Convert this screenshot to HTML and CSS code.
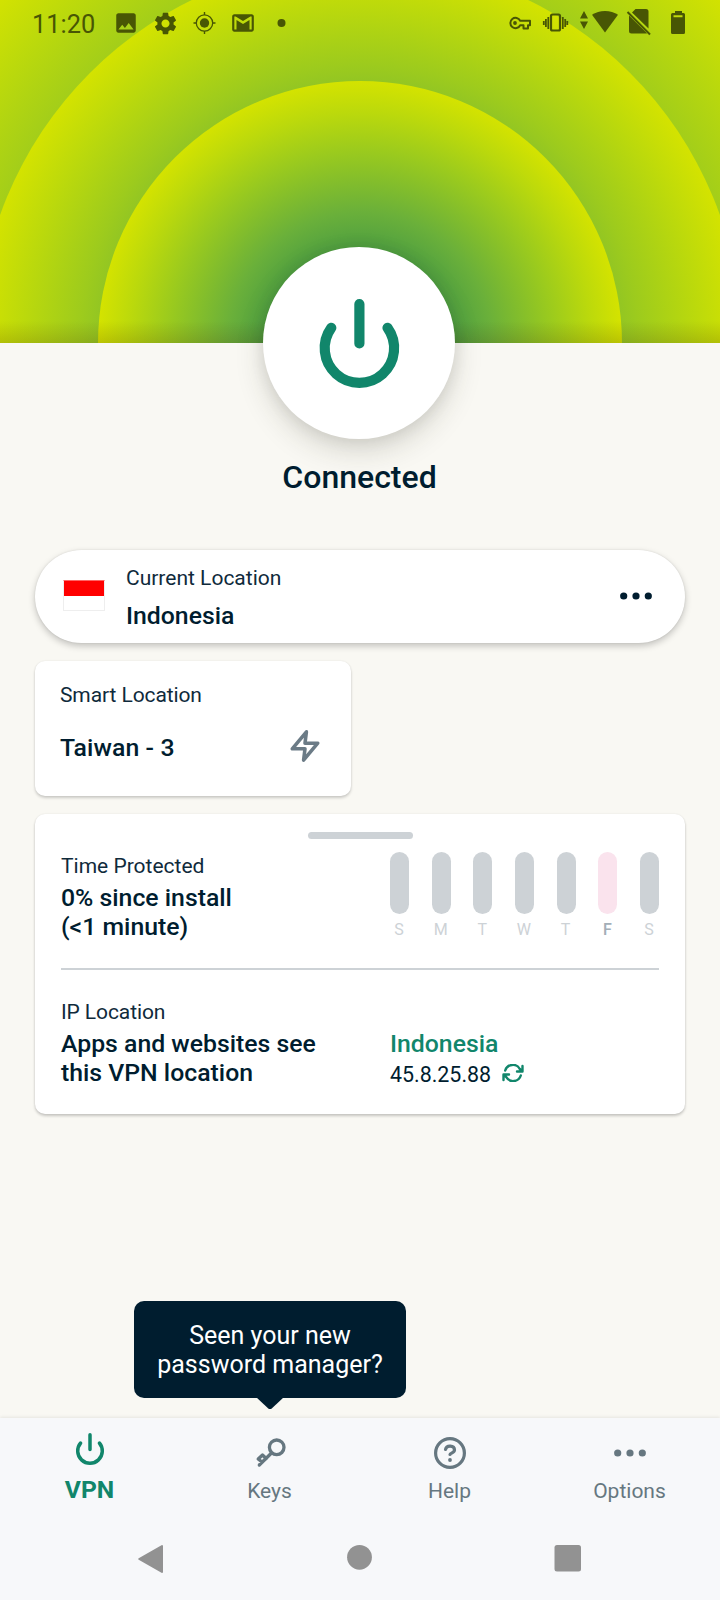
FILE: index.html
```html
<!DOCTYPE html>
<html lang="en">
<head>
<meta charset="utf-8">
<title>VPN</title>
<link rel="stylesheet" href="styles.css">
</head>
<body>
<div class="screen">
  <header class="hero">
    <svg class="rings" viewBox="0 0 720 343" width="720" height="343" aria-hidden="true">
      <defs>
        <radialGradient id="g1" gradientUnits="userSpaceOnUse" cx="360" cy="343" r="262">
          <stop offset="0.36" stop-color="#4f9f41"/><stop offset="0.5" stop-color="#6ab03a"/><stop offset="0.73" stop-color="#9aca1e"/><stop offset="0.88" stop-color="#bbd90c"/><stop offset="1" stop-color="#d4e300"/>
        </radialGradient>
        <radialGradient id="g2" gradientUnits="userSpaceOnUse" cx="360" cy="343" r="382">
          <stop offset="0.5" stop-color="#6ab03a"/><stop offset="0.73" stop-color="#9dcb1d"/><stop offset="0.88" stop-color="#bbd90c"/><stop offset="1" stop-color="#d4e300"/>
        </radialGradient>
        <radialGradient id="g3" gradientUnits="userSpaceOnUse" cx="360" cy="343" r="502">
          <stop offset="0.5" stop-color="#6ab03a"/><stop offset="0.73" stop-color="#9dcb1d"/><stop offset="0.88" stop-color="#bbd90c"/><stop offset="1" stop-color="#d4e300"/>
        </radialGradient>
        <linearGradient id="shade" x1="0" y1="0" x2="0" y2="1">
          <stop offset="0" stop-color="#402000" stop-opacity="0"/><stop offset="1" stop-color="#402000" stop-opacity="0.16"/>
        </linearGradient>
      </defs>
      <rect width="720" height="343" fill="url(#g3)"/>
      <circle cx="360" cy="343" r="382" fill="url(#g2)"/>
      <circle cx="360" cy="343" r="262" fill="url(#g1)"/>
      <rect y="321" width="720" height="22" fill="url(#shade)"/>
    </svg>
    <div class="status">
      <span class="clock">11:20</span>
      <div class="status-left">
        <svg width="26" height="26" viewBox="0 0 24 24"><path d="M21 19V5c0-1.100-.9-2-2-2H5c-1.100 0-2 .9-2 2v14c0 1.100.9 2 2 2h14c1.100 0 2-.9 2-2zM8.500 13.500l2.500 3.010L14.500 12l4.500 6H5l3.500-4.500z"/></svg>
        <svg width="27" height="27" viewBox="0 0 24 24"><path d="M19.140 12.940c.04-.3.06-.61.06-.94 0-.32-.02-.64-.07-.94l2.030-1.580c.18-.14.23-.41.12-.61l-1.920-3.320c-.12-.22-.37-.29-.59-.22l-2.390.96c-.5-.38-1.030-.7-1.620-.94l-.36-2.540c-.04-.24-.24-.41-.48-.41h-3.840c-.24 0-.43.17-.47.41l-.36 2.540c-.59.24-1.130.57-1.620.94l-2.390-.96c-.22-.08-.47 0-.59.22L2.740 8.870c-.12.21-.08.47.12.61l2.030 1.580c-.05.3-.09.63-.09.94s.02.64.07.94l-2.030 1.580c-.18.14-.23.41-.12.61l1.920 3.320c.12.22.37.29.59.22l2.390-.96c.5.38 1.030.7 1.620.94l.36 2.540c.05.24.24.41.48.41h3.840c.24 0 .44-.17.47-.41l.36-2.540c.59-.24 1.130-.56 1.620-.94l2.390.96c.22.08.47 0 .59-.22l1.920-3.320c.12-.22.07-.47-.12-.61l-2.010-1.580zM12 15.600c-1.980 0-3.600-1.620-3.600-3.600s1.620-3.600 3.600-3.600 3.600 1.620 3.600 3.600-1.620 3.600-3.600 3.600z"/></svg>
        <svg width="25" height="26" viewBox="-12.500 -13 25 26"><circle r="4.700"/><circle r="8.200" fill="none" stroke="#485604" stroke-width="1.300"/><path d="M-.7-11h1.400v3H-.7zM-.7 8h1.400v3H-.7zM-11-.7h3V.7h-3zM8-.7h3V.7H8z"/></svg>
        <svg width="26" height="26" viewBox="0 0 24 24"><path d="M20 4H4c-1.100 0-2 .9-2 2v12c0 1.100.9 2 2 2h16c1.100 0 2-.9 2-2V6c0-1.100-.9-2-2-2zm0 14h-2V9.250L12 13 6 9.250V18H4V6h1.200l6.800 4.250L18.800 6H20v12z"/></svg>
        <svg width="10" height="26" viewBox="0 0 10 26"><circle cx="5.500" cy="13" r="4"/></svg>
      </div>
      <div class="status-right">
        <svg width="180" height="48" viewBox="505 0 180 48">
          <g fill="none" stroke="#485604">
            <path stroke-width="2" stroke-linejoin="round" d="M520.200 20.700H530v4.600h-2v3.200h-4.500v-3.200h-3.300a5.200 5.200 0 1 1 0-4.600z"/>
            <rect x="551" y="14.500" width="9" height="16" rx="1.500" stroke-width="2.200"/>
            <path stroke-width="1.800" d="M548.300 17v12M545.900 19v8M543.800 21v4M562.800 17v12M565.200 19v8M567.300 21v4"/>
          </g>
          <circle cx="515" cy="23" r="1.900"/>
          <path d="M584 11l4 7.500h-8zM584 29l4-7.500h-8z"/>
          <path d="M605 32.500L592 14.800c7-5.200 19-5.200 26 0z"/>
          <path d="M635.500 9H646q2.500 0 2.500 2.500V28.500L632 12.500zM629 15.500l18 17.800q-.5.200-1 .2H631.500q-2.500 0-2.500-2.500z"/>
          <path d="M627.500 12L650 34.500" stroke="#485604" stroke-width="2"/>
          <path fill-rule="evenodd" d="M675 13v-2h7v2h1.500q1.500 0 1.500 1.500V32.500q0 1.500-1.500 1.500h-11q-1.500 0-1.500-1.500V14.500q0-1.500 1.500-1.500zM673.500 15.300v2h9v-2z"/>
        </svg>
      </div>
    </div>
  </header>

  <main class="content">
    <button class="power" aria-label="Disconnect">
      <svg width="192" height="192" viewBox="0 0 192 192" fill="none" stroke="#11866b" stroke-width="10.200" stroke-linecap="round"><path d="M96.400 57v39.500M68.300 80.800a34.700 34.700 0 1 0 56.200 0"/></svg>
    </button>
    <h1 class="state">Connected</h1>

    <section class="pill">
      <span class="flag"></span>
      <div class="pill-text"><p class="label">Current Location</p><p class="value">Indonesia</p></div>
      <svg class="more" width="32" height="8" viewBox="0 0 32 8" fill="#001d2f"><circle cx="3.700" cy="4" r="3.600"/><circle cx="16" cy="4" r="3.600"/><circle cx="28.300" cy="4" r="3.600"/></svg>
    </section>

    <section class="smart">
      <p class="label">Smart Location</p>
      <div class="smart-row">
        <p class="value">Taiwan - 3</p>
        <svg width="34" height="34" viewBox="0 0 24 24" fill="none" stroke="#6b7b86" stroke-width="2.500" stroke-linejoin="round"><path d="M13 2L3 14h9l-1 8 10-12h-9z"/></svg>
      </div>
    </section>

    <section class="stats">
      <div class="handle"></div>
      <div class="row time">
        <div class="col">
          <p class="label">Time Protected</p>
          <p class="value">0% since install<br>(&lt;1 minute)</p>
        </div>
        <div class="days">
          <div class="day"><i></i><span>S</span></div>
          <div class="day"><i></i><span>M</span></div>
          <div class="day"><i></i><span>T</span></div>
          <div class="day"><i></i><span>W</span></div>
          <div class="day"><i></i><span>T</span></div>
          <div class="day today"><i></i><span>F</span></div>
          <div class="day"><i></i><span>S</span></div>
        </div>
      </div>
      <div class="row ip">
        <div class="col">
          <p class="label">IP Location</p>
          <p class="value">Apps and websites see<br>this VPN location</p>
        </div>
        <div class="address">
          <p class="value green">Indonesia</p>
          <p class="ip-line"><span>45.8.25.88</span>
            <svg width="22" height="18" viewBox="0 0 22 18" fill="none" stroke="#11866b" stroke-width="2.400" stroke-linecap="round" stroke-linejoin="round"><path d="M20.500 2v5.500H15M1.500 16v-5.500H7M3.200 6.500a8 8 0 0 1 14.500-1.700l2.500 2.500M18.800 11.500a8 8 0 0 1-14.500 1.700l-2.500-2.500"/></svg>
          </p>
        </div>
      </div>
    </section>
    <div class="tip">Seen your new<br>password manager?
      <svg class="tip-arrow" width="28" height="12" viewBox="0 0 28 12"><path fill="#001d2f" d="M0 0h28L16 11.300q-2 1.700-4 0z"/></svg>
    </div>
  </main>

  <nav class="tabs">
    <a class="tab active">
      <svg width="36" height="36" viewBox="0 0 36 36" fill="none" stroke="#11866b" stroke-width="3.500" stroke-linecap="round"><path d="M18 3.700v14.800M8.600 12a12.300 12.300 0 1 0 18.800 0"/></svg>
      <span>VPN</span>
    </a>
    <a class="tab">
      <svg width="36" height="36" viewBox="0 0 36 36" fill="none" stroke="#667780" stroke-width="3.300" stroke-linecap="round" stroke-linejoin="round"><circle cx="24.700" cy="16.300" r="7.300"/><path d="M19.500 22L7.300 34M6.200 28l4.300-4 3.700 3.500M6.200 28l3.800 3"/></svg>
      <span>Keys</span>
    </a>
    <a class="tab">
      <svg width="36" height="36" viewBox="0 0 36 36" fill="none" stroke="#667780" stroke-width="3.200" stroke-linecap="round"><circle cx="18" cy="22" r="14.400"/><path d="M13.500 18.500c.8-4.600 9-4.500 9 .5 0 3-4.500 3-4.500 4.500"/><circle cx="18" cy="29" r="1.900" fill="#667780" stroke="none"/></svg>
      <span>Help</span>
    </a>
    <a class="tab">
      <svg width="36" height="36" viewBox="0 0 36 36" fill="#667780"><circle cx="5.700" cy="22" r="3.600"/><circle cx="18" cy="22" r="3.600"/><circle cx="30.300" cy="22" r="3.600"/></svg>
      <span>Options</span>
    </a>
  </nav>
  <div class="system">
    <svg width="30" height="30" viewBox="0 0 30 30"><path d="M3.200 15L26 2v26z" fill="#929292" stroke="#929292" stroke-width="2" stroke-linejoin="round"/></svg>
    <svg width="30" height="30" viewBox="0 0 30 30"><circle cx="14.500" cy="13.300" r="12.400" fill="#929292"/></svg>
    <svg width="30" height="30" viewBox="0 0 30 30"><rect x="1.500" y="1" width="26.500" height="26.500" rx="2.500" fill="#929292"/></svg>
  </div>
</div>
</body>
</html>
```

FILE: styles.css
```css
* { box-sizing: border-box; }
body { margin: 0; font-family: Roboto, "Liberation Sans", sans-serif; color: #001d2f; }
p, h1 { margin: 0; }
svg { display: block; flex: none; }

.screen { width: 720px; height: 1600px; display: flex; flex-direction: column; background: #f9f8f3; overflow: hidden; }

.hero { height: 343px; flex: none; display: grid; }
.rings, .status { grid-area: 1 / 1; }
.status { height: 48px; padding: 0 35px 0 32px; display: flex; align-items: flex-start; position: relative; z-index: 1; color: #485604; fill: #485604; }
.clock { width: 80px; font-size: 25.4px; line-height: 49px; }
.status-left { display: flex; gap: 13px; padding: 10px 0 0 1px; }
.status-left svg:last-child { margin-left: 7px; }
.status-right { margin-left: auto; }

.content { flex: 1; min-height: 0; padding: 0 35px; display: flex; flex-direction: column; position: relative; z-index: 1; }
.power { align-self: center; width: 192px; height: 192px; margin: -96px 2px 0 0; padding: 0; border: 0; border-radius: 50%; background: #fff; flex: none; box-shadow: 0 12px 28px rgba(50, 45, 30, .17), 0 1px 16px rgba(0, 0, 0, .09); }
.state { margin-top: 18px; padding-right: 1px; text-align: center; font-size: 32px; line-height: 40px; font-weight: 500; }

.label { font-size: 21px; line-height: 26px; color: #0f2a3b; }
.value { font-size: 24.8px; line-height: 29px; font-weight: 500; }

.pill { height: 93px; flex: none; margin-top: 53px; border-radius: 47px; background: #fff; display: flex; align-items: center; padding: 0 33px 0 28px; box-shadow: 0 3px 7px rgba(0, 0, 0, .22), 0 0 2px rgba(0, 0, 0, .1); }
.flag { width: 42px; height: 31px; margin-top: -2px; border: 1px solid #eee; border-top-color: #f66; background: linear-gradient(#f00 0 15px, #fff 15px); }
.pill-text { margin-left: 21px; padding-top: 1px; display: flex; flex-direction: column; gap: 10px; }
.more { margin: -2px 0 0 auto; }

.smart { width: 316px; height: 135px; flex: none; margin-top: 18px; padding: 21px 29px 0 25px; border-radius: 10px; background: #fff; box-shadow: 0 2px 3px rgba(0, 0, 0, .18), 0 0 2px rgba(0, 0, 0, .08); }
.smart .label, .ip .label { letter-spacing: -.1px; }
.smart-row { margin-top: 21px; display: flex; justify-content: space-between; align-items: center; }
.smart-row .value { padding-top: 2px; letter-spacing: .1px; }

.stats { height: 300px; flex: none; margin-top: 18px; padding: 18px 26px 0; border-radius: 10px; background: #fff; box-shadow: 0 2px 3px rgba(0, 0, 0, .2), 0 0 2px rgba(0, 0, 0, .08); }
.handle { width: 105px; height: 7px; margin-left: 247px; border-radius: 4px; background: #cdd2d6; }
.row { display: flex; }
.col { width: 329px; display: flex; flex-direction: column; gap: 4px; }
.time { height: 131px; padding-top: 13px; border-bottom: 2px solid #cdd2d6; }
.time .col, .ip .col { padding-top: 1px; }
.days { width: 269px; display: flex; justify-content: space-between; }
.day { width: 19px; display: flex; flex-direction: column; align-items: center; gap: 6px; font-size: 16px; line-height: 20px; color: #cdd2d6; }
.day i { width: 19px; height: 62px; border-radius: 10px; background: #cdd2d6; }
.day span { padding-right: 1px; }
.today { color: #a3aeb7; font-weight: 500; }
.today i { background: #fae3ed; }
.ip { padding-top: 28px; }
.address { padding-top: 31px; }
.green { color: #11866b; }
.ip-line { margin-top: 2px; display: flex; align-items: center; gap: 11px; font-size: 21.4px; line-height: 30px; }
.ip-line svg { margin-top: -4px; }

.tip { position: absolute; left: 134px; bottom: 20px; width: 272px; height: 97px; padding-top: 20px; border-radius: 10px; background: #001d2f; color: #fff; text-align: center; font-size: 25px; line-height: 29px; }
.tip-arrow { position: absolute; left: 122px; top: 96px; }

.tabs { height: 98px; flex: none; display: grid; grid-template-columns: repeat(4, 1fr); padding-top: 13px; background: #f7f8fa; box-shadow: 0 -1px 3px rgba(0, 0, 0, .08); color: #667780; }
.tab { display: flex; flex-direction: column; align-items: center; font-size: 21px; line-height: 26px; }
.tab svg { overflow: visible; }
.tab span { margin-top: 11px; padding-right: 1px; }
.active { color: #11866b; font-size: 24.7px; font-weight: 700; }
.active span { margin-top: 10px; }
.system { height: 84px; flex: none; display: flex; justify-content: space-between; padding: 28px 137px 0 136px; background: #f7f8fa; }
```
